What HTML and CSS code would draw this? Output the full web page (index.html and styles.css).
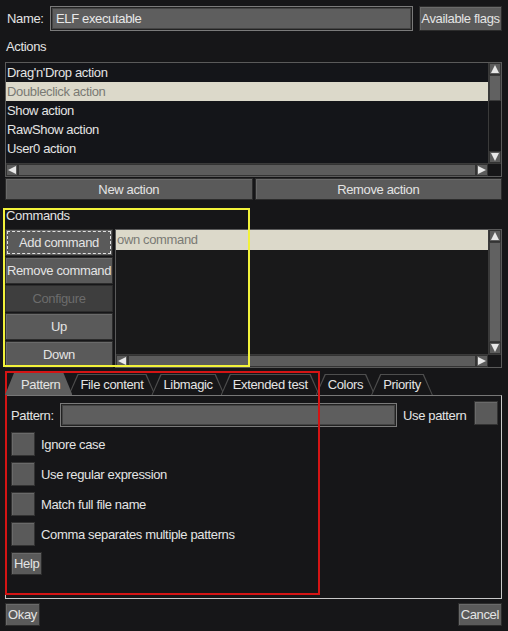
FILE: index.html
```html
<!DOCTYPE html>
<html lang="en">
  <head>
    <meta charset="UTF-8" />
    <title>File type</title>
    <link rel="stylesheet" href="styles.css">
  </head>
  <body>
    <div class="dialog">
      <div class="name-row">
        <span class="label">Name:</span>
        <div class="field name-field">ELF executable</div>
        <button class="btn flags-btn">Available flags</button>
      </div>

      <div class="section-label actions-label">Actions</div>
      <div class="listbox actions-list">
        <div class="list-body">
          <div class="rows">
            <div class="row">Drag'n'Drop action</div>
            <div class="row selected">Doubleclick action</div>
            <div class="row">Show action</div>
            <div class="row">RawShow action</div>
            <div class="row">User0 action</div>
          </div>
          <div class="vscroll">
            <div class="arrow"><svg width="10" height="10" viewBox="0 0 10 10"><path d="M5 1 L9 9 L1 9 Z" fill="#e8e8e8"/></svg></div>
            <div class="thumb short"></div>
            <div class="track"></div>
            <div class="arrow"><svg width="10" height="10" viewBox="0 0 10 10"><path d="M1 1 L9 1 L5 9 Z" fill="#e8e8e8"/></svg></div>
          </div>
        </div>
        <div class="hscroll">
          <div class="arrow"><svg width="10" height="10" viewBox="0 0 10 10"><path d="M9 1 L9 9 L1 5 Z" fill="#e8e8e8"/></svg></div>
          <div class="hthumb"></div>
          <div class="arrow"><svg width="10" height="10" viewBox="0 0 10 10"><path d="M1 1 L9 5 L1 9 Z" fill="#e8e8e8"/></svg></div>
          <div class="corner"></div>
        </div>
      </div>
      <div class="btn-row">
        <button class="btn wide">New action</button>
        <button class="btn wide">Remove action</button>
      </div>

      <div class="section-label commands-label">Commands</div>
      <div class="commands">
        <div class="cmd-buttons">
          <button class="btn cmd focus">Add command</button>
          <button class="btn cmd">Remove command</button>
          <button class="btn cmd disabled">Configure</button>
          <button class="btn cmd">Up</button>
          <button class="btn cmd">Down</button>
        </div>
        <div class="listbox cmd-list">
          <div class="list-body">
            <div class="rows">
              <div class="row selected cmd-row">own command</div>
            </div>
            <div class="vscroll">
              <div class="arrow"><svg width="10" height="10" viewBox="0 0 10 10"><path d="M5 1 L9 9 L1 9 Z" fill="#e8e8e8"/></svg></div>
              <div class="thumb long"></div>
              <div class="arrow"><svg width="10" height="10" viewBox="0 0 10 10"><path d="M1 1 L9 1 L5 9 Z" fill="#e8e8e8"/></svg></div>
            </div>
          </div>
          <div class="hscroll">
            <div class="arrow"><svg width="10" height="10" viewBox="0 0 10 10"><path d="M9 1 L9 9 L1 5 Z" fill="#e8e8e8"/></svg></div>
            <div class="hthumb"></div>
            <div class="arrow"><svg width="10" height="10" viewBox="0 0 10 10"><path d="M1 1 L9 5 L1 9 Z" fill="#e8e8e8"/></svg></div>
            <div class="corner"></div>
          </div>
        </div>
        <div class="mark yellow"></div>
      </div>

      <div class="tabs-area">
        <div class="tabs">
          <div class="tab active first">Pattern</div>
          <div class="tab">File content</div>
          <div class="tab">Libmagic</div>
          <div class="tab">Extended test</div>
          <div class="tab">Colors</div>
          <div class="tab">Priority</div>
        </div>
        <div class="panel">
          <div class="pattern-row">
            <span class="label pattern-label">Pattern:</span>
            <div class="field pattern-field"></div>
            <span class="label">Use pattern</span>
            <div class="check"></div>
          </div>
          <div class="opt first-opt"><div class="check"></div><span>Ignore case</span></div>
          <div class="opt"><div class="check"></div><span>Use regular expression</span></div>
          <div class="opt"><div class="check"></div><span>Match full file name</span></div>
          <div class="opt"><div class="check"></div><span>Comma separates multiple patterns</span></div>
          <button class="btn small help">Help</button>
        </div>
        <div class="mark red"></div>
      </div>

      <div class="footer">
        <button class="btn small">Okay</button>
        <button class="btn small">Cancel</button>
      </div>
    </div>
  </body>
</html>
```

FILE: styles.css
```css
html, body {
  margin: 0;
  background-color: #161618;
}
body {
  font-family: "Liberation Sans", Arial, sans-serif;
  font-size: 13px;
  letter-spacing: -0.35px;
  color: #e4e4e4;
  width: 508px;
  height: 631px;
  overflow: hidden;
}
.dialog {
  padding: 6px 6px 0 5px;
}
.label {
  white-space: nowrap;
  flex-shrink: 0;
}
.btn {
  font-family: inherit;
  font-size: 13px;
  letter-spacing: -0.35px;
  color: #e4e4e4;
  background-color: #5a5a5a;
  border: 1px solid #2c2c2c;
  box-shadow: inset 1px 1px 0 #6a6a6a;
  padding: 0;
  margin: 0;
  white-space: nowrap;
}
.field {
  background-color: #5e5e5e;
  border: 1px solid #7a7a7a;
  box-shadow: inset 0 0 0 1px #222, inset 0 0 0 2px #444;
  box-sizing: border-box;
  color: #e8e8e8;
  flex-shrink: 0;
}

/* name row */
.name-row {
  display: flex;
  align-items: center;
  height: 25px;
}
.name-row .label {
  width: 43px;
  padding-left: 2px;
}
.name-field {
  width: 363px;
  height: 25px;
  padding: 4px 0 0 5px;
}
.flags-btn {
  margin-left: 6px;
  width: 84px;
  height: 25px;
}

.section-label {
  height: 14px;
  line-height: 14px;
  padding-left: 1px;
}
.actions-label {
  margin-top: 9px;
  margin-bottom: 8px;
}

/* lists */
.listbox {
  border: 1px solid #5a5a5a;
  background-color: #141519;
  box-sizing: border-box;
  display: flex;
  flex-direction: column;
}
.list-body {
  flex: 1;
  display: flex;
  min-height: 0;
}
.rows {
  flex: 1;
  overflow: hidden;
}
.row {
  height: 19px;
  line-height: 19px;
  padding-left: 1px;
  white-space: nowrap;
}
.row.selected {
  background-color: #dcd9ca;
  color: #7a7a74;
}
.vscroll {
  width: 12px;
  background-color: #161618;
  border-left: 1px solid #3a3a3a;
  display: flex;
  flex-direction: column;
}
.vscroll .arrow, .hscroll .arrow {
  width: 12px;
  height: 12px;
  background-color: #5c5c5c;
  display: flex;
  align-items: center;
  justify-content: center;
  box-sizing: border-box;
  border: 1px solid #333;
}
.thumb {
  background-color: #616161;
  border: 1px solid #3a3a3a;
  box-sizing: border-box;
}
.thumb.short {
  height: 26px;
}
.thumb.long {
  flex: 1;
}
.track {
  flex: 1;
}
.hscroll {
  height: 12px;
  display: flex;
  background-color: #161618;
  border-top: 1px solid #3a3a3a;
}
.hthumb {
  flex: 1;
  background-color: #5c5c5c;
  border: 1px solid #333;
}
.corner {
  width: 13px;
  background-color: #161618;
}

.actions-list {
  height: 115px;
}

.btn-row {
  display: flex;
  gap: 2px;
  margin-top: 1px;
}
.btn.wide {
  flex: 1;
  height: 22px;
}

/* commands */
.commands-label {
  margin-top: 9px;
  margin-bottom: 6px;
}
.commands {
  position: relative;
  display: flex;
  gap: 2px;
  height: 139px;
}
.cmd-buttons {
  width: 108px;
  display: flex;
  flex-direction: column;
  gap: 1px;
}
.btn.cmd {
  height: 27px;
}
.btn.cmd.focus {
  outline: 1px dashed #e0e0e0;
  outline-offset: -3px;
}
.btn.cmd.disabled {
  background-color: #3e3e3e;
  color: #6c6c6c;
  box-shadow: none;
}
.cmd-list {
  flex: 1;
  background-color: #19191a;
}
.cmd-row {
  height: 20px;
  line-height: 20px;
  color: #55554f;
  padding-left: 1px;
}

.mark {
  position: absolute;
  pointer-events: none;
}
.mark.yellow {
  left: -2px;
  top: -21px;
  width: 243px;
  height: 155px;
  border: 2px solid #f2f23a;
}

/* tabs */
.tabs-area {
  position: relative;
  margin-top: 5px;
}
.tabs {
  display: flex;
  height: 22px;
}
.tab {
  position: relative;
  isolation: isolate;
  padding: 0 12px;
  line-height: 23px;
  margin-right: -4px;
  white-space: nowrap;
  color: #e4e4e4;
}
.tab.first {
  padding-left: 16px;
  padding-right: 12px;
}
.tab::before {
  content: "";
  position: absolute;
  inset: 1px 0 0 0;
  background-color: #4e4e4e;
  clip-path: polygon(9px 0, calc(100% - 9px) 0, 100% 100%, 0 100%);
  z-index: -1;
}
.tab::after {
  content: "";
  position: absolute;
  inset: 2px 1px 0 1px;
  background-color: #161618;
  clip-path: polygon(9px 0, calc(100% - 9px) 0, 100% 100%, 0 100%);
  z-index: -1;
}
.tab.active {
  z-index: 1;
}
.tab.active::before {
  inset: 0;
  background-color: #5e5e5e;
}
.tab.active::after {
  display: none;
}
.panel {
  height: 204px;
  border: 1px solid #c8c8c8;
  border-top-color: #777;
  box-sizing: border-box;
  padding: 6px 0 0 5px;
}
.pattern-row {
  display: flex;
  align-items: center;
  height: 26px;
}
.pattern-label {
  width: 49px;
}
.pattern-field {
  width: 337px;
  height: 24px;
  margin-right: 6px;
}
.pattern-row .check {
  margin-left: 8px;
  margin-top: -4px;
}
.check {
  width: 24px;
  height: 24px;
  flex-shrink: 0;
  background-color: #5a5a5a;
  border: 1px solid #333;
  box-sizing: border-box;
  box-shadow: inset 1px 1px 0 #6a6a6a;
}
.opt {
  display: flex;
  align-items: center;
  gap: 6px;
  height: 24px;
  margin-top: 6px;
}
.opt.first-opt {
  margin-top: 4px;
}
.btn.small {
  height: 23px;
  padding: 0 2px;
}
.help {
  margin-top: 6px;
}
.mark.red {
  left: 0;
  top: -2px;
  width: 311px;
  height: 220px;
  border: 2px solid #d41414;
}

.footer {
  display: flex;
  justify-content: space-between;
  margin-top: 4px;
}
```
